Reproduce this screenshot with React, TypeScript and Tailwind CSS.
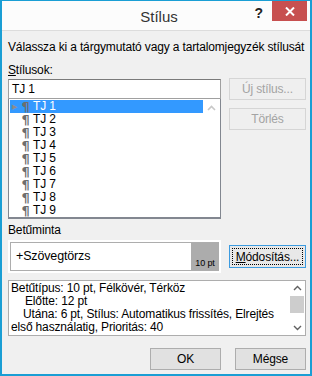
import React from 'react';

const styles = ['TJ 1', 'TJ 2', 'TJ 3', 'TJ 4', 'TJ 5', 'TJ 6', 'TJ 7', 'TJ 8', 'TJ 9'];

function DisabledButton({ label }: { label: string }) {
  return (
    <div className="w-[77px] h-[22px] border border-[#d5d5d5] bg-[#efefef] text-[#a3a3a3] flex items-center justify-center">
      {label}
    </div>
  );
}

export default function App() {
  return (
    <div
      className="w-[312px] h-[376px] bg-[#f0f0f0] border-2 border-t border-[#1a9ed4] flex flex-col text-[12px] tracking-[-0.15px] text-black overflow-hidden whitespace-nowrap"
      style={{ fontFamily: '"Liberation Sans", Arial, sans-serif' }}
    >
      {/* title bar */}
      <div className="h-[30px] bg-[#fcfcfc] border-b border-[#dcdcdc] grid shrink-0">
        <div className="col-start-1 row-start-1 flex justify-center pt-[5px] pl-[6px] text-[15px] tracking-normal text-[#333]">Stílus</div>
        <div className="col-start-1 row-start-1 flex justify-end items-start">
          <span className="mt-[2px] mr-[9px] text-[14px] font-bold text-[#222]">?</span>
          <div className="w-[35px] h-[20px] bg-[#c75050] mr-[3px] flex items-center justify-center">
            <svg width="10" height="9" viewBox="0 0 10 9">
              <path d="M1 0.5 L9 8.5 M9 0.5 L1 8.5" stroke="white" strokeWidth="2" />
            </svg>
          </div>
        </div>
      </div>

      <div className="flex-1 flex flex-col pl-[6px] pr-[3px]">
        <div className="mt-[8px] h-[17px] leading-[17px]">Válassza ki a tárgymutató vagy a tartalomjegyzék stílusát</div>

        <div className="mt-[6px] h-[17px] leading-[17px]">
          <span className="underline">S</span>tílusok:
        </div>

        <div className="flex">
          {/* styles list */}
          <div className="w-[213px] flex flex-col">
            <div className="h-[20px] bg-white border border-[#a0a0a0] border-t-[#7a7a7a] pl-[3px] leading-[18px]">TJ 1</div>
            <div className="h-[120px] bg-white border border-[#828790] border-t-0 border-b-2 flex">
              <div className="flex-1 flex flex-col pt-[1px] pl-[1px]">
                {styles.map((s, i) => (
                  <div
                    key={s}
                    className={`h-[13px] flex items-center leading-[13px] ${i === 0 ? 'bg-[#3399ff] text-white' : ''}`}
                  >
                    <span className="w-[9px] flex justify-center text-[#8c8c8c] text-[7px] leading-none">{i === 0 ? '▶' : ''}</span>
                    <span
                      className="w-[13px] text-[#6e6e6e] font-bold text-[13px] leading-[12px] text-center"
                      style={{ fontFamily: '"DejaVu Sans", sans-serif' }}
                    >
                      ¶
                    </span>
                    <span className="ml-[1px]">{s}</span>
                  </div>
                ))}
              </div>
              <div className="w-[17px] flex justify-center pt-[6px]">
                <svg width="9" height="6" viewBox="0 0 9 6">
                  <path d="M1 5 L4.5 1.5 L8 5" stroke="#c8c8c8" strokeWidth="1.6" fill="none" />
                </svg>
              </div>
            </div>
          </div>

          <div className="flex flex-col gap-[8px] ml-[8px] -mt-[1px]">
            <DisabledButton label="Új stílus..." />
            <DisabledButton label="Törlés" />
          </div>
        </div>

        <div className="mt-[3px] h-[17px] leading-[17px]">Betűminta</div>

        <div className="flex items-center mt-[1px]">
          <div className="w-[213px] h-[33px] bg-white p-[2px]">
            <div className="h-full border border-[#adadad] border-r-0 flex">
              <div className="flex-1 pl-[5px] text-[12.5px] leading-[27px]">+Szövegtörzs</div>
              <div className="w-[28px] bg-[#acacac] flex items-end justify-center text-[9px] leading-[12px] pb-[1px]">10 pt</div>
            </div>
          </div>
          <div className="ml-[8px] w-[77px] h-[23px] border border-[#3c9be0] bg-[#e8e8e8] p-[2px]">
            <div className="h-full border border-dotted border-black flex items-center justify-center">
              <span><span className="underline">M</span>ódosítás...</span>
            </div>
          </div>
        </div>

        {/* description */}
        <div className="mt-[7px] w-[298px] h-[56px] bg-white border border-[#adadad] flex">
          <div className="flex-1 pl-[2px] leading-[13px] pt-[1px] overflow-hidden">
            <div>Betűtípus: 10 pt, Félkövér, Térköz</div>
            <div className="pl-[14px]">Előtte: 12 pt</div>
            <div className="pl-[12px]">Utána: 6 pt, Stílus: Automatikus frissítés, Elrejtés</div>
            <div>első használatig, Prioritás: 40</div>
          </div>
          <div className="w-[16px] flex flex-col items-center pt-[4px]">
            <svg width="9" height="6" viewBox="0 0 9 6">
              <path d="M1 5 L4.5 1.5 L8 5" stroke="#606060" strokeWidth="1.4" fill="none" />
            </svg>
            <div className="w-[14px] h-[17px] bg-[#cdcdcd] mt-[5px]" />
            <div className="flex-1" />
            <svg width="9" height="6" viewBox="0 0 9 6" className="mb-[4px]">
              <path d="M1 1 L4.5 4.5 L8 1" stroke="#606060" strokeWidth="1.4" fill="none" />
            </svg>
          </div>
        </div>

        <div className="flex justify-end gap-[14px] mt-[12px] mr-[1px]">
          <div className="w-[71px] h-[22px] border border-[#adadad] bg-[#e1e1e1] flex items-center justify-center">OK</div>
          <div className="w-[71px] h-[22px] border border-[#adadad] bg-[#e1e1e1] flex items-center justify-center">Mégse</div>
        </div>
      </div>
    </div>
  );
}
